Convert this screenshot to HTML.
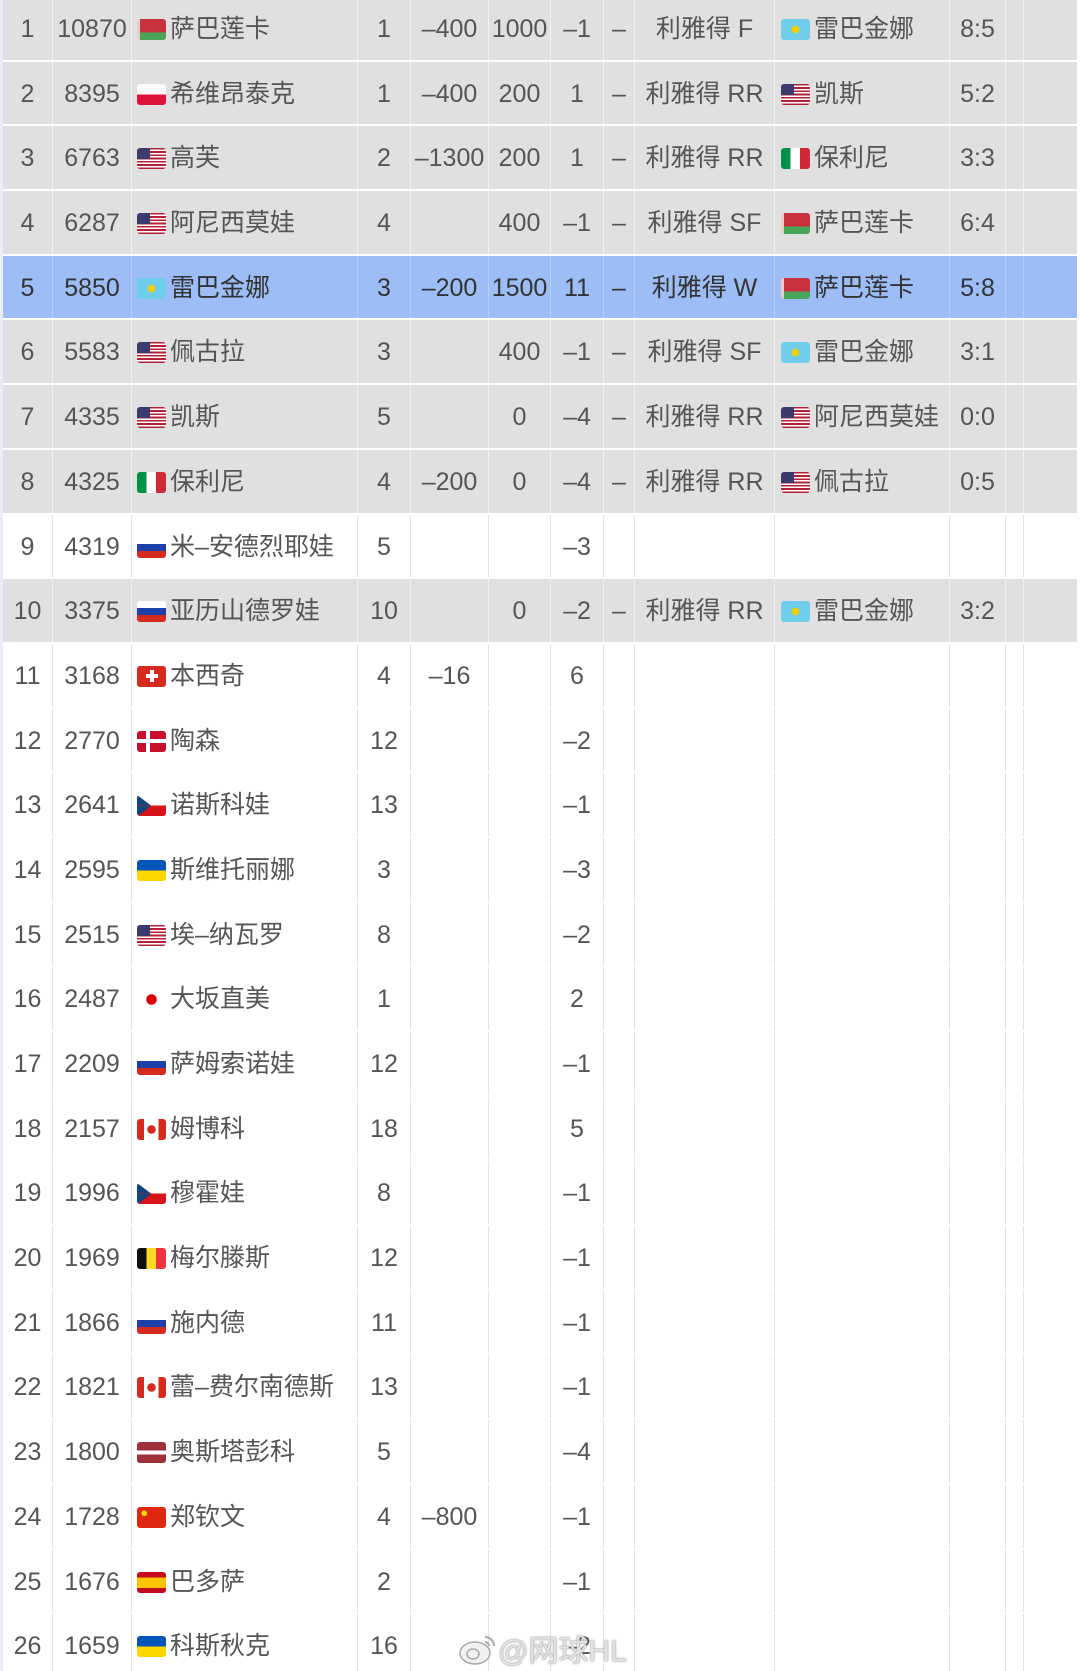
<!DOCTYPE html>
<html><head><meta charset="utf-8"><style>
html,body{margin:0;padding:0;background:#fff;width:1080px;height:1671px;overflow:hidden}
body{font-family:"Liberation Sans","Noto Sans CJK SC",sans-serif;font-size:25px;color:#555;position:relative}
.t{position:absolute;left:3px;top:-3px;width:1074px}
.r{display:flex;height:64.7px;box-sizing:border-box;border-bottom:2px solid #fff}
.r>div{box-sizing:border-box;border-right:1.5px solid #e4e4e4;text-align:center;line-height:64px;white-space:nowrap;overflow:hidden}
.g{background:#e0e0e0}.g>div{border-right-color:#f2f2f2}
.h{background:#9dbdf6;color:#333}.h>div{border-right-color:#b9cff8}
.w{background:#fff}
.c1{width:50px}.c2{width:79px}.c3{width:226px;text-align:left!important;padding-left:5px}.c4{width:53px}.c5{width:78px}.c6{width:62px}.c7{width:53px}.c8{width:31px}.c9{width:140px}.c10{width:175px;text-align:left!important;padding-left:6px}.c11{width:56px}.c12{width:18px}.c13{width:53px;border-right:none!important}
.f{display:inline-block;width:29px;height:21px;border-radius:3px;vertical-align:-3px;margin-right:4px}
.by{background:linear-gradient(#c8313e 64%,#4aa657 64%);border-left:3px solid #eccaca;width:26px}
.pl{background:linear-gradient(#fafafa 50%,#dc143c 50%)}
.us{background:linear-gradient(#3c3b6e,#3c3b6e) 0 0/45% 54% no-repeat,repeating-linear-gradient(#b22234 0 1.62px,#fff 1.62px 3.24px)}
.kz{background:radial-gradient(circle at 50% 50%,#f5d000 0 3.5px,#6fcdec 4px)}
.it{background:linear-gradient(to right,#009246 33%,#fff 33% 66%,#ce2b37 66%)}
.ru{background:linear-gradient(#fff 33%,#1c3fa8 33% 66%,#d52b1e 66%)}
.ch{background:linear-gradient(#fff,#fff) center/12px 4px no-repeat,linear-gradient(#fff,#fff) center/4px 12px no-repeat,#d52b1e}
.dk{background:linear-gradient(#fff,#fff) 0 50%/100% 4px no-repeat,linear-gradient(#fff,#fff) 9px 0/4px 100% no-repeat,#c8102e}
.cz{background:linear-gradient(to top right,#11457e 50%,transparent 50.5%) 0 0/14px 50% no-repeat,linear-gradient(to bottom right,#11457e 50%,transparent 50.5%) 0 100%/14px 50% no-repeat,linear-gradient(#fff 50%,#d7141a 50%)}
.ua{background:linear-gradient(#0057b7 50%,#ffd700 50%)}
.jp{background:radial-gradient(circle,#d00 0 5px,#fff 5.5px)}
.ca{background:radial-gradient(circle,#d52b1e 0 4px,transparent 4.5px),linear-gradient(to right,#d52b1e 25%,#fff 25% 75%,#d52b1e 75%)}
.be{background:linear-gradient(to right,#111 33%,#fdda24 33% 66%,#ef3340 66%)}
.lv{background:linear-gradient(#9e3039 40%,#fff 40% 60%,#9e3039 60%)}
.cn{background:radial-gradient(circle at 25% 30%,#ffde00 0 2.5px,transparent 3px),#de2910}
.es{background:linear-gradient(#c60b1e 25%,#ffc400 25% 75%,#c60b1e 75%)}
.wm{position:absolute;left:458px;top:1626px;font-size:30px;color:rgba(235,235,235,.9);text-shadow:0 0 2px #999,0 0 1px #888}
.lb{position:absolute;left:0;top:0;width:3px;height:1671px;background:#e8eef8}
</style></head><body>
<div class="lb"></div>
<div class="t">
<div class="r g"><div class="c1">1</div><div class="c2">10870</div><div class="c3"><span class="f by"></span>萨巴莲卡</div><div class="c4">1</div><div class="c5">–400</div><div class="c6">1000</div><div class="c7">–1</div><div class="c8">–</div><div class="c9">利雅得 F</div><div class="c10"><span class="f kz"></span>雷巴金娜</div><div class="c11">8:5</div><div class="c12"></div><div class="c13"></div></div>
<div class="r g"><div class="c1">2</div><div class="c2">8395</div><div class="c3"><span class="f pl"></span>希维昂泰克</div><div class="c4">1</div><div class="c5">–400</div><div class="c6">200</div><div class="c7">1</div><div class="c8">–</div><div class="c9">利雅得 RR</div><div class="c10"><span class="f us"></span>凯斯</div><div class="c11">5:2</div><div class="c12"></div><div class="c13"></div></div>
<div class="r g"><div class="c1">3</div><div class="c2">6763</div><div class="c3"><span class="f us"></span>高芙</div><div class="c4">2</div><div class="c5">–1300</div><div class="c6">200</div><div class="c7">1</div><div class="c8">–</div><div class="c9">利雅得 RR</div><div class="c10"><span class="f it"></span>保利尼</div><div class="c11">3:3</div><div class="c12"></div><div class="c13"></div></div>
<div class="r g"><div class="c1">4</div><div class="c2">6287</div><div class="c3"><span class="f us"></span>阿尼西莫娃</div><div class="c4">4</div><div class="c5"></div><div class="c6">400</div><div class="c7">–1</div><div class="c8">–</div><div class="c9">利雅得 SF</div><div class="c10"><span class="f by"></span>萨巴莲卡</div><div class="c11">6:4</div><div class="c12"></div><div class="c13"></div></div>
<div class="r h"><div class="c1">5</div><div class="c2">5850</div><div class="c3"><span class="f kz"></span>雷巴金娜</div><div class="c4">3</div><div class="c5">–200</div><div class="c6">1500</div><div class="c7">11</div><div class="c8">–</div><div class="c9">利雅得 W</div><div class="c10"><span class="f by"></span>萨巴莲卡</div><div class="c11">5:8</div><div class="c12"></div><div class="c13"></div></div>
<div class="r g"><div class="c1">6</div><div class="c2">5583</div><div class="c3"><span class="f us"></span>佩古拉</div><div class="c4">3</div><div class="c5"></div><div class="c6">400</div><div class="c7">–1</div><div class="c8">–</div><div class="c9">利雅得 SF</div><div class="c10"><span class="f kz"></span>雷巴金娜</div><div class="c11">3:1</div><div class="c12"></div><div class="c13"></div></div>
<div class="r g"><div class="c1">7</div><div class="c2">4335</div><div class="c3"><span class="f us"></span>凯斯</div><div class="c4">5</div><div class="c5"></div><div class="c6">0</div><div class="c7">–4</div><div class="c8">–</div><div class="c9">利雅得 RR</div><div class="c10"><span class="f us"></span>阿尼西莫娃</div><div class="c11">0:0</div><div class="c12"></div><div class="c13"></div></div>
<div class="r g"><div class="c1">8</div><div class="c2">4325</div><div class="c3"><span class="f it"></span>保利尼</div><div class="c4">4</div><div class="c5">–200</div><div class="c6">0</div><div class="c7">–4</div><div class="c8">–</div><div class="c9">利雅得 RR</div><div class="c10"><span class="f us"></span>佩古拉</div><div class="c11">0:5</div><div class="c12"></div><div class="c13"></div></div>
<div class="r w"><div class="c1">9</div><div class="c2">4319</div><div class="c3"><span class="f ru"></span>米–安德烈耶娃</div><div class="c4">5</div><div class="c5"></div><div class="c6"></div><div class="c7">–3</div><div class="c8"></div><div class="c9"></div><div class="c10"></div><div class="c11"></div><div class="c12"></div><div class="c13"></div></div>
<div class="r g"><div class="c1">10</div><div class="c2">3375</div><div class="c3"><span class="f ru"></span>亚历山德罗娃</div><div class="c4">10</div><div class="c5"></div><div class="c6">0</div><div class="c7">–2</div><div class="c8">–</div><div class="c9">利雅得 RR</div><div class="c10"><span class="f kz"></span>雷巴金娜</div><div class="c11">3:2</div><div class="c12"></div><div class="c13"></div></div>
<div class="r w"><div class="c1">11</div><div class="c2">3168</div><div class="c3"><span class="f ch"></span>本西奇</div><div class="c4">4</div><div class="c5">–16</div><div class="c6"></div><div class="c7">6</div><div class="c8"></div><div class="c9"></div><div class="c10"></div><div class="c11"></div><div class="c12"></div><div class="c13"></div></div>
<div class="r w"><div class="c1">12</div><div class="c2">2770</div><div class="c3"><span class="f dk"></span>陶森</div><div class="c4">12</div><div class="c5"></div><div class="c6"></div><div class="c7">–2</div><div class="c8"></div><div class="c9"></div><div class="c10"></div><div class="c11"></div><div class="c12"></div><div class="c13"></div></div>
<div class="r w"><div class="c1">13</div><div class="c2">2641</div><div class="c3"><span class="f cz"></span>诺斯科娃</div><div class="c4">13</div><div class="c5"></div><div class="c6"></div><div class="c7">–1</div><div class="c8"></div><div class="c9"></div><div class="c10"></div><div class="c11"></div><div class="c12"></div><div class="c13"></div></div>
<div class="r w"><div class="c1">14</div><div class="c2">2595</div><div class="c3"><span class="f ua"></span>斯维托丽娜</div><div class="c4">3</div><div class="c5"></div><div class="c6"></div><div class="c7">–3</div><div class="c8"></div><div class="c9"></div><div class="c10"></div><div class="c11"></div><div class="c12"></div><div class="c13"></div></div>
<div class="r w"><div class="c1">15</div><div class="c2">2515</div><div class="c3"><span class="f us"></span>埃–纳瓦罗</div><div class="c4">8</div><div class="c5"></div><div class="c6"></div><div class="c7">–2</div><div class="c8"></div><div class="c9"></div><div class="c10"></div><div class="c11"></div><div class="c12"></div><div class="c13"></div></div>
<div class="r w"><div class="c1">16</div><div class="c2">2487</div><div class="c3"><span class="f jp"></span>大坂直美</div><div class="c4">1</div><div class="c5"></div><div class="c6"></div><div class="c7">2</div><div class="c8"></div><div class="c9"></div><div class="c10"></div><div class="c11"></div><div class="c12"></div><div class="c13"></div></div>
<div class="r w"><div class="c1">17</div><div class="c2">2209</div><div class="c3"><span class="f ru"></span>萨姆索诺娃</div><div class="c4">12</div><div class="c5"></div><div class="c6"></div><div class="c7">–1</div><div class="c8"></div><div class="c9"></div><div class="c10"></div><div class="c11"></div><div class="c12"></div><div class="c13"></div></div>
<div class="r w"><div class="c1">18</div><div class="c2">2157</div><div class="c3"><span class="f ca"></span>姆博科</div><div class="c4">18</div><div class="c5"></div><div class="c6"></div><div class="c7">5</div><div class="c8"></div><div class="c9"></div><div class="c10"></div><div class="c11"></div><div class="c12"></div><div class="c13"></div></div>
<div class="r w"><div class="c1">19</div><div class="c2">1996</div><div class="c3"><span class="f cz"></span>穆霍娃</div><div class="c4">8</div><div class="c5"></div><div class="c6"></div><div class="c7">–1</div><div class="c8"></div><div class="c9"></div><div class="c10"></div><div class="c11"></div><div class="c12"></div><div class="c13"></div></div>
<div class="r w"><div class="c1">20</div><div class="c2">1969</div><div class="c3"><span class="f be"></span>梅尔滕斯</div><div class="c4">12</div><div class="c5"></div><div class="c6"></div><div class="c7">–1</div><div class="c8"></div><div class="c9"></div><div class="c10"></div><div class="c11"></div><div class="c12"></div><div class="c13"></div></div>
<div class="r w"><div class="c1">21</div><div class="c2">1866</div><div class="c3"><span class="f ru"></span>施内德</div><div class="c4">11</div><div class="c5"></div><div class="c6"></div><div class="c7">–1</div><div class="c8"></div><div class="c9"></div><div class="c10"></div><div class="c11"></div><div class="c12"></div><div class="c13"></div></div>
<div class="r w"><div class="c1">22</div><div class="c2">1821</div><div class="c3"><span class="f ca"></span>蕾–费尔南德斯</div><div class="c4">13</div><div class="c5"></div><div class="c6"></div><div class="c7">–1</div><div class="c8"></div><div class="c9"></div><div class="c10"></div><div class="c11"></div><div class="c12"></div><div class="c13"></div></div>
<div class="r w"><div class="c1">23</div><div class="c2">1800</div><div class="c3"><span class="f lv"></span>奥斯塔彭科</div><div class="c4">5</div><div class="c5"></div><div class="c6"></div><div class="c7">–4</div><div class="c8"></div><div class="c9"></div><div class="c10"></div><div class="c11"></div><div class="c12"></div><div class="c13"></div></div>
<div class="r w"><div class="c1">24</div><div class="c2">1728</div><div class="c3"><span class="f cn"></span>郑钦文</div><div class="c4">4</div><div class="c5">–800</div><div class="c6"></div><div class="c7">–1</div><div class="c8"></div><div class="c9"></div><div class="c10"></div><div class="c11"></div><div class="c12"></div><div class="c13"></div></div>
<div class="r w"><div class="c1">25</div><div class="c2">1676</div><div class="c3"><span class="f es"></span>巴多萨</div><div class="c4">2</div><div class="c5"></div><div class="c6"></div><div class="c7">–1</div><div class="c8"></div><div class="c9"></div><div class="c10"></div><div class="c11"></div><div class="c12"></div><div class="c13"></div></div>
<div class="r w"><div class="c1">26</div><div class="c2">1659</div><div class="c3"><span class="f ua"></span>科斯秋克</div><div class="c4">16</div><div class="c5"></div><div class="c6"></div><div class="c7">–2</div><div class="c8"></div><div class="c9"></div><div class="c10"></div><div class="c11"></div><div class="c12"></div><div class="c13"></div></div>
</div>
<div class="wm"><svg width="40" height="36" viewBox="0 0 40 36" style="vertical-align:-6px"><ellipse cx="17" cy="22" rx="15" ry="11" fill="rgba(240,240,240,.9)" stroke="#aaa" stroke-width="1.5"/><ellipse cx="15" cy="23" rx="6" ry="5" fill="none" stroke="#aaa" stroke-width="1.5"/><path d="M27 6a9 9 0 0 1 9 9M27 11a4 4 0 0 1 4 4" fill="none" stroke="#aaa" stroke-width="2"/></svg>@网球HL</div>
</body></html>
